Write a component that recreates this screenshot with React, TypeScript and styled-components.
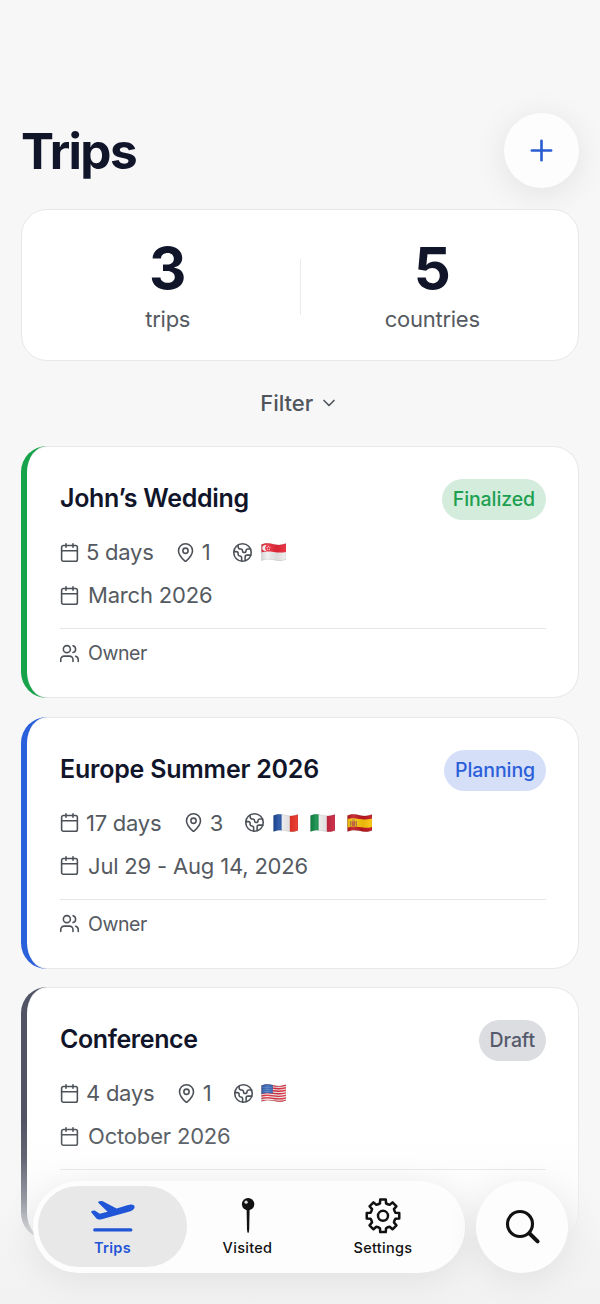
import React from "react";
import styled, { createGlobalStyle } from "styled-components";
import { Calendar, ChevronDown, Earth, MapPin, Plus, Users } from "lucide-react";

const GlobalStyle = createGlobalStyle`
  * { box-sizing: border-box; }
  body {
    margin: 0;
    background: #f7f7f8;
    font-family: Inter, "Liberation Sans", sans-serif;
    color: #11152a;
    font-feature-settings: "calt" 0;
  }
`;

const Screen = styled.div`
  position: relative;
  width: 600px;
  height: 1304px;
  overflow: hidden;
  padding: 112px 21px 0;
  background: #f7f7f8;
`;

const Header = styled.header`
  display: flex;
  justify-content: space-between;
  align-items: center;
  height: 77px;
`;

const Heading = styled.h1`
  margin: 0;
  font-size: 49.5px;
  line-height: 60px;
  font-weight: 700;
  letter-spacing: -1.6px;
`;

const AddButton = styled.button`
  display: flex;
  align-items: center;
  justify-content: center;
  width: 75px;
  height: 75px;
  padding: 0;
  border: 0;
  border-radius: 50%;
  background: #fdfdfe;
  color: #2a5bd0;
  box-shadow: 0 6px 34px rgba(0, 0, 0, 0.09);
`;

const Stats = styled.section`
  position: relative;
  display: flex;
  align-items: center;
  height: 152px;
  margin-top: 20px;
  padding: 0 14px;
  border: 1px solid #e8e8ea;
  border-radius: 26px;
  background: #fff;
`;

const Stat = styled.div`
  flex: 1;
  display: flex;
  flex-direction: column;
  align-items: center;
`;

const StatValue = styled.div`
  font-size: 58px;
  line-height: 66px;
  font-weight: 700;
`;

const StatLabel = styled.div`
  margin-top: 2px;
  margin-bottom: 1px;
  font-size: 22px;
  line-height: 32px;
  letter-spacing: -0.25px;
  color: #555a61;
`;

const StatDivider = styled.div`
  width: 1px;
  height: 56px;
  margin-top: 4px;
  background: #ebebed;
`;

const FilterButton = styled.button`
  display: flex;
  align-items: center;
  justify-content: center;
  gap: 5.5px;
  width: 100%;
  height: 85px;
  padding: 0 1px 1px 0;
  border: 0;
  background: none;
  font: 500 22px/30px Inter, sans-serif;
  color: #50555c;
`;

const TripList = styled.main`
  display: flex;
  flex-direction: column;
  gap: 18.7px;
`;

const Card = styled.article<{ $accent: string }>`
  height: 252px;
  padding: 33px 33px 0 33px;
  border: 0 solid ${(p) => p.$accent};
  border-left-width: 6px;
  border-radius: 26px;
  background: #fff;
  box-shadow:
    inset -1px 0 0 #e8e8ea,
    inset 0 1px 0 #e8e8ea,
    inset 0 -1px 0 #e8e8ea;
`;

const CardTop = styled.div`
  display: flex;
  align-items: flex-start;
  justify-content: space-between;
  height: 57px;
`;

const CardTitle = styled.h2<{ $track: number }>`
  margin: 3px 0 0;
  font-size: 25px;
  line-height: 32px;
  font-weight: 600;
  letter-spacing: ${(p) => p.$track}px;
`;

const Badge = styled.span<{ $fg: string; $bg: string }>`
  padding: 0 11px;
  border-radius: 21px;
  font-size: 19.5px;
  line-height: 41px;
  font-weight: 500;
  letter-spacing: -0.1px;
  color: ${(p) => p.$fg};
  background: ${(p) => p.$bg};
`;

const MetaRow = styled.div`
  display: flex;
  align-items: center;
  height: 32px;
  gap: 22.3px;
  font-size: 22px;
  letter-spacing: -0.25px;
  color: #555a61;

  svg.lucide { margin-left: -1px; color: #4c5158; }
`;

const DateRow = styled(MetaRow)`
  margin-top: 11px;
  gap: 8px;
  letter-spacing: -0.18px;
`;

const Meta = styled.span`
  display: flex;
  align-items: center;
  gap: 6px;
`;

const Flags = styled.span`
  display: flex;
  gap: 12px;
  margin-left: 1.8px;
`;

const OwnerRow = styled(MetaRow)`
  height: 49px;
  margin-top: 17px;
  gap: 8px;
  border-top: 1px solid #e6e6e9;
  font-size: 19.5px;
  letter-spacing: -0.45px;
`;

const BottomFade = styled.div`
  position: absolute;
  left: 0;
  right: 0;
  bottom: 0;
  height: 184px;
  background: linear-gradient(
    rgba(245, 245, 245, 0) 0%,
    rgba(245, 245, 245, 0.1) 20%,
    rgba(245, 245, 245, 0.42) 42%,
    rgba(244, 244, 244, 0.8) 60%,
    rgba(243, 243, 243, 1) 72%,
    #f2f2f2 100%
  );
`;

const BottomBar = styled.nav`
  position: absolute;
  left: 33px;
  right: 32px;
  bottom: 31px;
  display: flex;
  justify-content: space-between;
`;

const Tabs = styled.div`
  display: flex;
  width: 432px;
  height: 92px;
  padding: 5px;
  border-radius: 46px;
  background: #fdfdfd;
  box-shadow: 0 6px 36px rgba(0, 0, 0, 0.08);
`;

const Tab = styled.button<{ $active?: boolean; $width: number }>`
  display: flex;
  flex-direction: column;
  align-items: center;
  width: ${(p) => p.$width}px;
  height: 81px;
  padding: 12px 0 0;
  border: 0;
  border-radius: 41px;
  background: ${(p) => (p.$active ? "#e8e8e8" : "none")};
  color: ${(p) => (p.$active ? "#1f55d6" : "#111")};
  font: ${(p) => (p.$active ? 600 : 500)} 14.5px/20px Inter, sans-serif;
  letter-spacing: 0.3px;

  svg { display: block; margin-bottom: 4px; flex: none; }
`;

const SearchButton = styled.button`
  display: flex;
  align-items: center;
  justify-content: center;
  width: 92px;
  height: 92px;
  padding: 0 0 0 1px;
  border: 0;
  border-radius: 50%;
  background: #fdfdfd;
  box-shadow: 0 6px 36px rgba(0, 0, 0, 0.08);
`;

type Country = "sg" | "fr" | "it" | "es" | "us";

const WAVE = "M0.5 1.6 C5 -0.4 8 0.2 12.5 1.2 S20 2.2 25 0.6 V16.4 C20.5 18.3 17 17.8 12.5 16.8 S5 15.9 0.5 17.6 Z";

function Flag({ code }: { code: Country }) {
  const id = `wave-${code}`;
  return (
    <svg width="25" height="18" viewBox="0 0 25 18">
      <clipPath id={id}>
        <path d={WAVE} />
      </clipPath>
      <linearGradient id={`${id}-shade`} x1="0" x2="1">
        <stop offset="0" stopColor="#000" stopOpacity="0.12" />
        <stop offset="0.25" stopColor="#fff" stopOpacity="0.12" />
        <stop offset="0.65" stopColor="#000" stopOpacity="0.08" />
        <stop offset="1" stopColor="#fff" stopOpacity="0.08" />
      </linearGradient>
      <g clipPath={`url(#${id})`}>
        {code === "fr" && (
          <>
            <path d="M0 0H8.8V18H0Z" fill="#1a4a9f" />
            <path d="M8.8 0H16.8V18H8.8Z" fill="#f4f4f4" />
            <path d="M16.8 0H25V18H16.8Z" fill="#ea3326" />
          </>
        )}
        {code === "it" && (
          <>
            <path d="M0 0H8.8V18H0Z" fill="#0a8a43" />
            <path d="M8.8 0H16.8V18H8.8Z" fill="#f4f4f4" />
            <path d="M16.8 0H25V18H16.8Z" fill="#ca2440" />
          </>
        )}
        {code === "es" && (
          <>
            <path d="M0 0H25V18H0Z" fill="#c0161f" />
            <path d="M0 5.2C5 3.6 8 4.2 12.5 5S20 5.6 25 4.4V13C20 14.4 17 13.8 12.5 13S5 12.2 0 13.8Z" fill="#fdc60b" />
            <path d="M4.6 7.2h3.8v3.2a1.9 1.9 0 0 1-3.8 0Z" fill="#b9532c" />
            <path d="M3.6 7v5.4M9.4 7v5.4M5 6h3" stroke="#8c6a3c" strokeWidth="0.9" />
          </>
        )}
        {code === "sg" && (
          <>
            <path d="M0 0H25V18H0Z" fill="#efeff0" />
            <path d="M0 0H25V9C20 10 17 9.6 12.5 9S5 8.4 0 9.6Z" fill="#ea2839" />
            <path d="M5.4 2.4A2.9 2.9 0 1 0 5.4 7.6A3.2 3.2 0 0 1 5.4 2.4Z" fill="#fff" />
            <g fill="#fff">
              <circle cx="7.5" cy="3.2" r="0.55" />
              <circle cx="6.2" cy="4.5" r="0.55" />
              <circle cx="8.9" cy="4.5" r="0.55" />
              <circle cx="6.7" cy="6.2" r="0.55" />
              <circle cx="8.4" cy="6.2" r="0.55" />
            </g>
          </>
        )}
        {code === "us" && (
          <>
            <path d="M0 0H25V18H0Z" fill="#f6eeee" />
            {[0, 1, 2, 3, 4, 5, 6].map((i) => (
              <path
                key={i}
                d={`M0 ${1.9 + i * 2.55}C5 ${0.3 + i * 2.55} 8 ${0.9 + i * 2.55} 12.5 ${1.7 + i * 2.55}S20 ${2.4 + i * 2.55} 25 ${1.2 + i * 2.55}`}
                stroke="#dd2f3f"
                strokeWidth="1.4"
                fill="none"
              />
            ))}
            <path d="M0 0H11.8V9.6C8 8.8 4 8.8 0 10Z" fill="#2f62b4" />
            <path d="M1.5 3.4H11M2.5 5.4H11M1.5 7.4H11" stroke="#bccbe6" strokeWidth="0.6" strokeDasharray="0.8 1.2" />
          </>
        )}
        <path d="M0 0H25V18H0Z" fill={`url(#${id}-shade)`} />
      </g>
      <path d={WAVE} fill="none" stroke="#000" strokeOpacity="0.16" strokeWidth="0.6" />
    </svg>
  );
}

function PlaneIcon() {
  return (
    <svg width="46" height="36" viewBox="0 0 46 36" fill="currentColor">
      <path d="M1.8 13.1L4 12.6Q4.8 12.4 5.5 12.9L9.8 15.8L17.6 13.8L8.5 5Q7.7 4.1 8.7 3.6L11 3Q11.9 2.8 12.8 3.3L26.6 10.6L37.2 7.2Q41.8 5.9 43.9 7.3Q45.8 9.6 42.8 12Q41.4 13 38.8 13.8L10.8 21.4Q7.8 22.1 6.2 20.2L1.4 14.5Q0.8 13.5 1.8 13.1Z" />
      <rect x="3.2" y="30.2" width="39.2" height="3.2" rx="1.5" />
    </svg>
  );
}

function PinIcon() {
  return (
    <svg width="46" height="36" viewBox="0 0 46 36">
      <path d="M21.6 11h3l-.4 20.5q-.3 3.6-1.1 3.6t-1.1-3.6Z" fill="#111" />
      <circle cx="23.1" cy="6.2" r="6.2" fill="#111" />
      <circle cx="21.1" cy="4.2" r="1.6" fill="#dedede" />
    </svg>
  );
}

const GEAR_TEETH = 8;

function gearPath(cx: number, cy: number, outer: number, inner: number) {
  const step = (Math.PI * 2) / GEAR_TEETH;
  const at = (r: number, a: number) =>
    `${(cx + r * Math.sin(a)).toFixed(2)} ${(cy - r * Math.cos(a)).toFixed(2)}`;
  let d = "";
  for (let i = 0; i < GEAR_TEETH; i++) {
    const a = i * step;
    d += `${i ? "L" : "M"}${at(inner, a - 0.24)}L${at(outer, a - 0.17)}L${at(outer, a + 0.17)}L${at(inner, a + 0.24)}`;
    d += `Q${at(inner - 0.6, a + step / 2)} ${at(inner, a + step - 0.24)}`;
  }
  return d + "Z";
}

function GearIcon() {
  return (
    <svg width="46" height="36" viewBox="0 0 46 36" fill="none" stroke="#111" strokeWidth="2.5" strokeLinejoin="round">
      <path d={gearPath(23, 17.8, 16.5, 12.8)} />
      <circle cx="23" cy="17.8" r="5" />
    </svg>
  );
}

function SearchIcon() {
  return (
    <svg width="36" height="36" viewBox="0 0 36 36" fill="none" stroke="#111" strokeLinecap="round">
      <circle cx="15" cy="15" r="12.5" strokeWidth="3.1" />
      <path d="M24.8 24.8L32.6 32.4" strokeWidth="4" />
    </svg>
  );
}

interface Trip {
  title: string;
  track: number;
  accent: string;
  status: string;
  fg: string;
  bg: string;
  days: string;
  places: number;
  flags: Country[];
  date: string;
}

const trips: Trip[] = [
  { title: "John’s Wedding", track: -0.3, accent: "#18a34a", status: "Finalized", fg: "#1d9f50", bg: "#d3ecdc", days: "5 days", places: 1, flags: ["sg"], date: "March 2026" },
  { title: "Europe Summer 2026", track: -0.22, accent: "#2a60dc", status: "Planning", fg: "#2b5fd9", bg: "#d5dff8", days: "17 days", places: 3, flags: ["fr", "it", "es"], date: "Jul 29 - Aug 14, 2026" },
  { title: "Conference", track: -0.4, accent: "#505464", status: "Draft", fg: "#555a6b", bg: "#dcdde1", days: "4 days", places: 1, flags: ["us"], date: "October 2026" },
];

function TripCard({ trip }: { trip: Trip }) {
  return (
    <Card $accent={trip.accent}>
      <CardTop>
        <CardTitle $track={trip.track}>{trip.title}</CardTitle>
        <Badge $fg={trip.fg} $bg={trip.bg}>{trip.status}</Badge>
      </CardTop>
      <MetaRow>
        <Meta><Calendar size={21} strokeWidth={1.8} />{trip.days}</Meta>
        <Meta><MapPin size={21} strokeWidth={1.8} />{trip.places}</Meta>
        <Meta>
          <Earth size={21} strokeWidth={1.8} />
          <Flags>{trip.flags.map((code) => <Flag key={code} code={code} />)}</Flags>
        </Meta>
      </MetaRow>
      <DateRow><Calendar size={21} strokeWidth={1.8} />{trip.date}</DateRow>
      <OwnerRow><Users size={21} strokeWidth={1.8} />Owner</OwnerRow>
    </Card>
  );
}

export default function App() {
  return (
    <Screen>
      <GlobalStyle />
      <Header>
        <Heading>Trips</Heading>
        <AddButton aria-label="Add trip"><Plus size={33} strokeWidth={1.9} /></AddButton>
      </Header>
      <Stats>
        <Stat><StatValue>3</StatValue><StatLabel>trips</StatLabel></Stat>
        <StatDivider />
        <Stat><StatValue>5</StatValue><StatLabel>countries</StatLabel></Stat>
      </Stats>
      <FilterButton>Filter <ChevronDown size={20} strokeWidth={2} /></FilterButton>
      <TripList>
        {trips.map((trip) => <TripCard key={trip.title} trip={trip} />)}
      </TripList>
      <BottomFade />
      <BottomBar>
        <Tabs>
          <Tab $active $width={149}><PlaneIcon />Trips</Tab>
          <Tab $width={121}><PinIcon />Visited</Tab>
          <Tab $width={150}><GearIcon />Settings</Tab>
        </Tabs>
        <SearchButton aria-label="Search"><SearchIcon /></SearchButton>
      </BottomBar>
    </Screen>
  );
}
